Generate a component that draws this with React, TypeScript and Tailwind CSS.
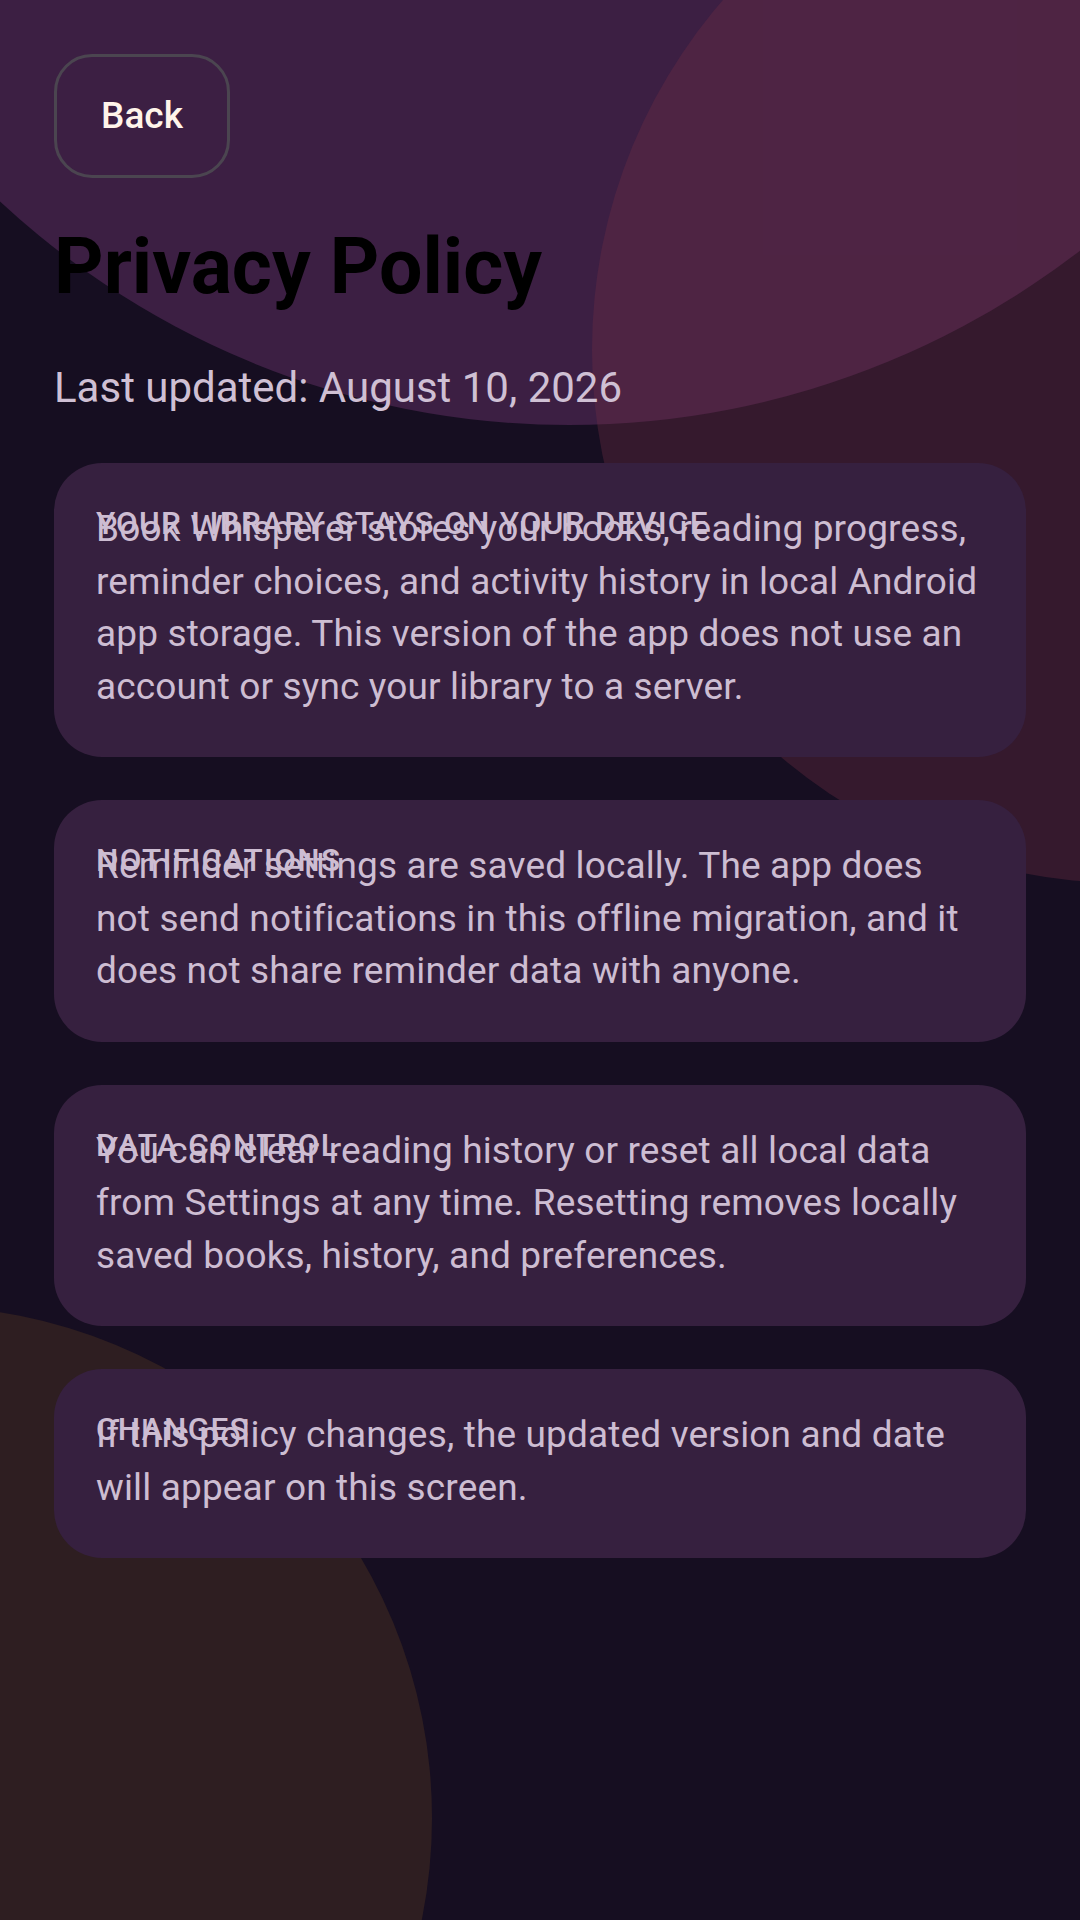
const sections = [
  {
    title: "YOUR LIBRARY STAYS ON YOUR DEVICE",
    body: "Book Whisperer stores your books, reading progress, reminder choices, and activity history in local Android app storage. This version of the app does not use an account or sync your library to a server.",
  },
  {
    title: "NOTIFICATIONS",
    body: "Reminder settings are saved locally. The app does not send notifications in this offline migration, and it does not share reminder data with anyone.",
  },
  {
    title: "DATA CONTROL",
    body: "You can clear reading history or reset all local data from Settings at any time. Resetting removes locally saved books, history, and preferences.",
  },
  {
    title: "CHANGES",
    body: "If this policy changes, the updated version and date will appear on this screen.",
  },
];

function PolicyCard({ title, body }: { title: string; body: string }) {
  return (
    <div className="grid rounded-[48px] bg-[#36203f] px-[42px] pt-[40px] pb-[44px]">
      <div className="col-start-1 row-start-1 text-[31.5px] leading-[42px] font-medium tracking-[1.3px] text-[#cdbdd2]">
        {title}
      </div>
      <p className="col-start-1 row-start-1 text-[37px] leading-[52.5px] tracking-[0.15px] text-[#cdbdd2]">
        {body}
      </p>
    </div>
  );
}

export default function App() {
  return (
    <div
      className="relative min-h-screen overflow-hidden bg-[#160e21]"
      style={{ fontFamily: "Roboto, 'Noto Sans', sans-serif" }}
    >
      {/* background blobs */}
      <div className="pointer-events-none absolute inset-0">
        <div className="absolute left-[-267px] top-[-1247px] h-[1672px] w-[1672px] rounded-full bg-[#3c1f43]" />
        <div className="absolute left-[592px] top-[-183px] h-[1066px] w-[1066px] rounded-full bg-[rgba(113,45,70,0.35)]" />
        <div className="absolute left-[-592px] top-[1306px] h-[1024px] w-[1024px] rounded-full bg-[#2e1e21]" />
      </div>

      <div className="relative flex flex-col px-[54px] pt-[54px]">
        <button className="flex h-[124px] w-[176px] items-center justify-center rounded-[38px] border-[3px] border-[#4b4550] text-[37px] font-medium text-[#fff4ea]">
          Back
        </button>

        <h1 className="mt-[41px] text-[77px] leading-[96px] font-bold text-black">Privacy Policy</h1>

        <p className="mt-[41px] text-[42px] leading-[63px] text-[#cfc0d4]">Last updated: August 10, 2026</p>

        <div className="mt-[44px] flex flex-col gap-[43px]">
          {sections.map((s) => (
            <PolicyCard key={s.title} title={s.title} body={s.body} />
          ))}
        </div>
      </div>
    </div>
  );
}
